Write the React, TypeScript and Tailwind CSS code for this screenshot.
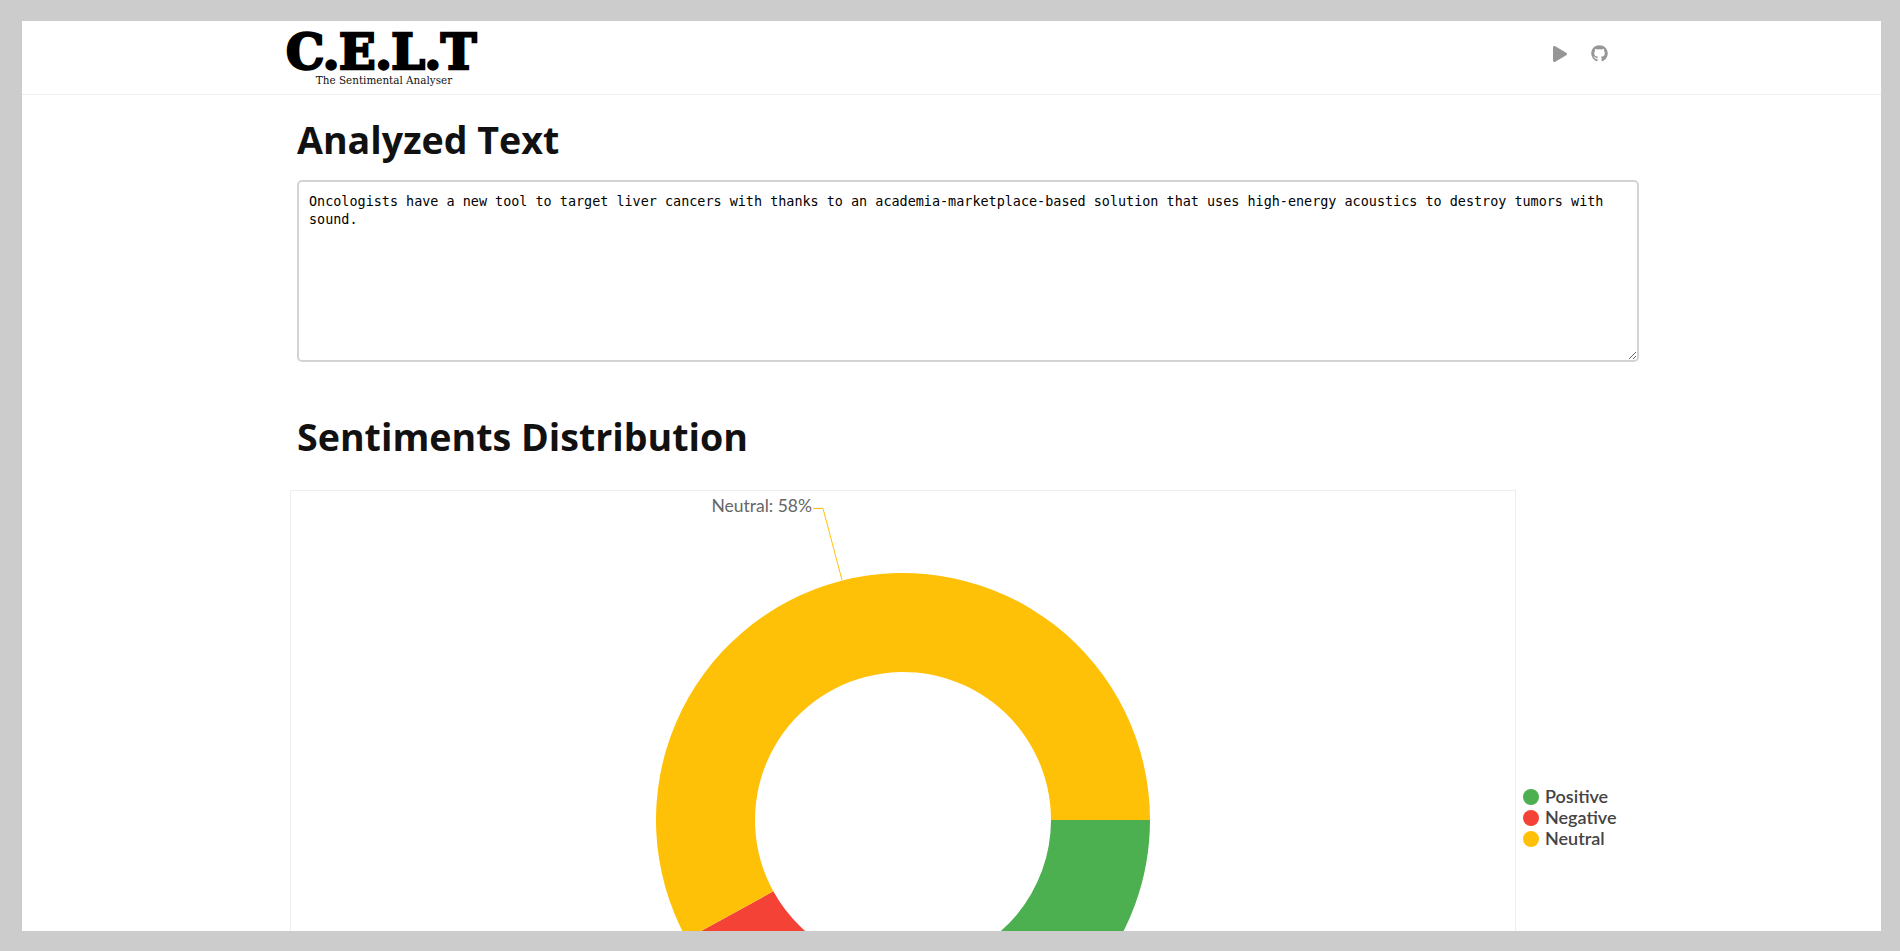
import React from "react";
import { FaGithub, FaPlay } from "react-icons/fa";

const legendItems = [
  { name: "Positive", color: "bg-[#4caf50]" },
  { name: "Negative", color: "bg-[#f44336]" },
  { name: "Neutral", color: "bg-[#ffc107]" },
];

// donut geometry, in the svg's own coordinates
const cx = 612;
const cy = 329;
const outer = 247;
const inner = 148;

const slice = (from: number, to: number) => {
  const rad = (a: number) => (a * Math.PI) / 180;
  const pt = (r: number, a: number) =>
    `${(cx + r * Math.cos(rad(a))).toFixed(2)} ${(cy + r * Math.sin(rad(a))).toFixed(2)}`;
  const large = to - from > 180 ? 1 : 0;
  return `M${pt(outer, from)} A${outer} ${outer} 0 ${large} 1 ${pt(outer, to)} L${pt(inner, to)} A${inner} ${inner} 0 ${large} 0 ${pt(inner, from)} Z`;
};

const App: React.FC = () => {
  return (
    <div className="h-screen overflow-hidden bg-[#cccccc] pt-[21px] pb-[20px] pl-[22px] pr-[19px]">
      <div className="h-full overflow-hidden bg-white">
        {/* Header */}
        <header className="h-[74px] border-b border-[#eeeeee] pl-[263px] pr-[273px] flex items-start justify-between">
          <div className="w-[192px] pt-[9px] flex flex-col items-center">
            <div className="font-['DejaVu_Serif','serif'] font-bold text-[48px] leading-[44px] text-black whitespace-nowrap tracking-[-0.5px] [-webkit-text-stroke:2.5px_black]">
              C.E.L.T
            </div>
            <div className="font-['DejaVu_Serif','serif'] text-[10.4px] leading-[12px] ml-[6px] text-[#111111] whitespace-nowrap">
              The Sentimental Analyser
            </div>
          </div>
          <div className="flex items-center gap-[23px] pt-[24px]">
            <FaPlay size={16} className="text-[#969696]" />
            <FaGithub size={17} className="text-[#969696]" />
          </div>
        </header>

        <main className="pl-[275px] pr-[242px]">
          <h1 className="font-['Open_Sans',sans-serif] font-bold text-[37.6px] leading-[49px] text-[#111111] mt-[20px]">
            Analyzed Text
          </h1>
          <textarea
            readOnly
            className="block mt-[16px] w-[1342px] h-[182px] border-2 border-[#d3d3d3] rounded-[5px] px-[10px] pt-[11px] pb-[9px] font-['DejaVu_Sans_Mono',monospace] text-[13.45px] leading-[18px] text-black outline-none"
            defaultValue="Oncologists have a new tool to target liver cancers with thanks to an academia-marketplace-based solution that uses high-energy acoustics to destroy tumors with sound."
          />
          <h1 className="font-['Open_Sans',sans-serif] font-bold text-[37.6px] leading-[49px] text-[#111111] mt-[50px]">
            Sentiments Distribution
          </h1>
        </main>

        {/* Chart with legend */}
        <section className="mt-[29px] pl-[268px] flex items-start">
          <div className="w-[1226px] h-[660px] border border-[#eeeeee] shrink-0">
            <svg width="1224" height="658" className="block">
              <path d={slice(0, 80)} fill="#4caf50" />
              <path d={slice(80, 151.2)} fill="#f44336" />
              <path d={slice(151.2, 360)} fill="#ffc107" />
              <polyline
                points="522,17.5 532,17.5 551,89"
                fill="none"
                stroke="#ffc107"
                strokeWidth="1"
              />
              <text
                x="521"
                y="21"
                textAnchor="end"
                fontFamily="Lato, sans-serif"
                fontSize="17.5"
                fill="#666666"
              >
                Neutral: 58%
              </text>
            </svg>
          </div>
          <ul className="mt-[296px] ml-[7px] font-['Lato',sans-serif] font-semibold text-[18px] leading-[21px] text-[#444444]">
            {legendItems.map((item) => (
              <li key={item.name} className="flex items-center gap-[6px]">
                <span className={`w-[16px] h-[16px] rounded-full ${item.color}`}></span>
                {item.name}
              </li>
            ))}
          </ul>
        </section>
      </div>
    </div>
  );
};

export default App;
